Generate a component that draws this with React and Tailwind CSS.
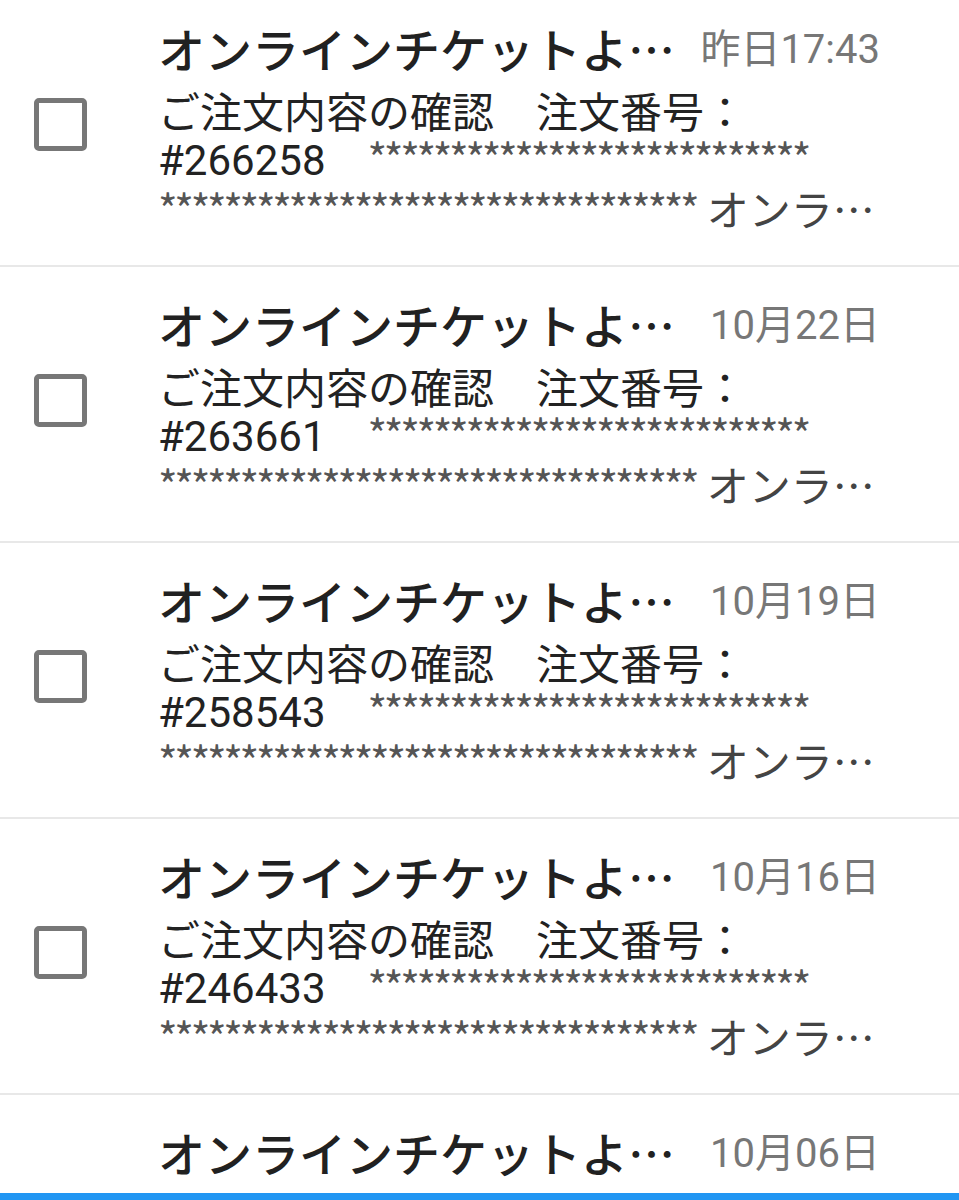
import React from 'react';

const mails = [
  { date: '昨日17:43', no: '#266258' },
  { date: '10月22日', no: '#263661' },
  { date: '10月19日', no: '#258543' },
  { date: '10月16日', no: '#246433' },
  { date: '10月06日', no: '#224410' },
];

const font = { fontFamily: 'Roboto, "Noto Sans CJK JP", sans-serif' };

function Stars({ n }) {
  return (
    <span className="font-['Noto_Sans_CJK_JP'] text-[42px] leading-[40px] text-[#555555] tracking-[-3.3px]">
      {'*'.repeat(n)}
    </span>
  );
}

function Row({ mail }) {
  return (
    <div className="flex items-center border-b-2 border-[#e8e8e8] pl-[34px] pr-[79px] pt-[27px] pb-[34px] shrink-0">
      <div className="w-[53px] h-[53px] shrink-0 rounded-[5px] border-[5px] border-[#777777]" />
      <div className="ml-[71px] flex-1 min-w-0">
        <div className="flex items-center justify-between h-[64px] whitespace-nowrap">
          <span className="text-[47px] text-[#212121] font-medium">
            オンラインチケットよ<span className="font-['Noto_Sans_CJK_JP']">…</span>
          </span>
          <span className="text-[40px] text-[#777777]">{mail.date}</span>
        </div>
        <div className="mt-2 text-[42px] leading-[47px] text-[#222222] whitespace-nowrap">
          <div className="h-[47px]">ご注文内容の確認　注文番号：</div>
          <div className="h-[47px]">
            {mail.no}　<Stars n={27} />
          </div>
          <div className="h-[47px] text-[#444444]">
            <Stars n={33} />{' '}
            オンラ<span className="font-['Noto_Sans_CJK_JP']">…</span>
          </div>
        </div>
      </div>
    </div>
  );
}

export default function App() {
  return (
    <div className="h-[1200px] w-full bg-white flex flex-col overflow-hidden" style={font}>
      <div className="flex-1 min-h-0 overflow-hidden">
        <div className="-mt-[9px] flex flex-col">
          {mails.map((m, i) => (
            <Row key={i} mail={m} />
          ))}
        </div>
      </div>
      <div className="h-[7px] bg-[#2196f3] shrink-0" />
    </div>
  );
}
